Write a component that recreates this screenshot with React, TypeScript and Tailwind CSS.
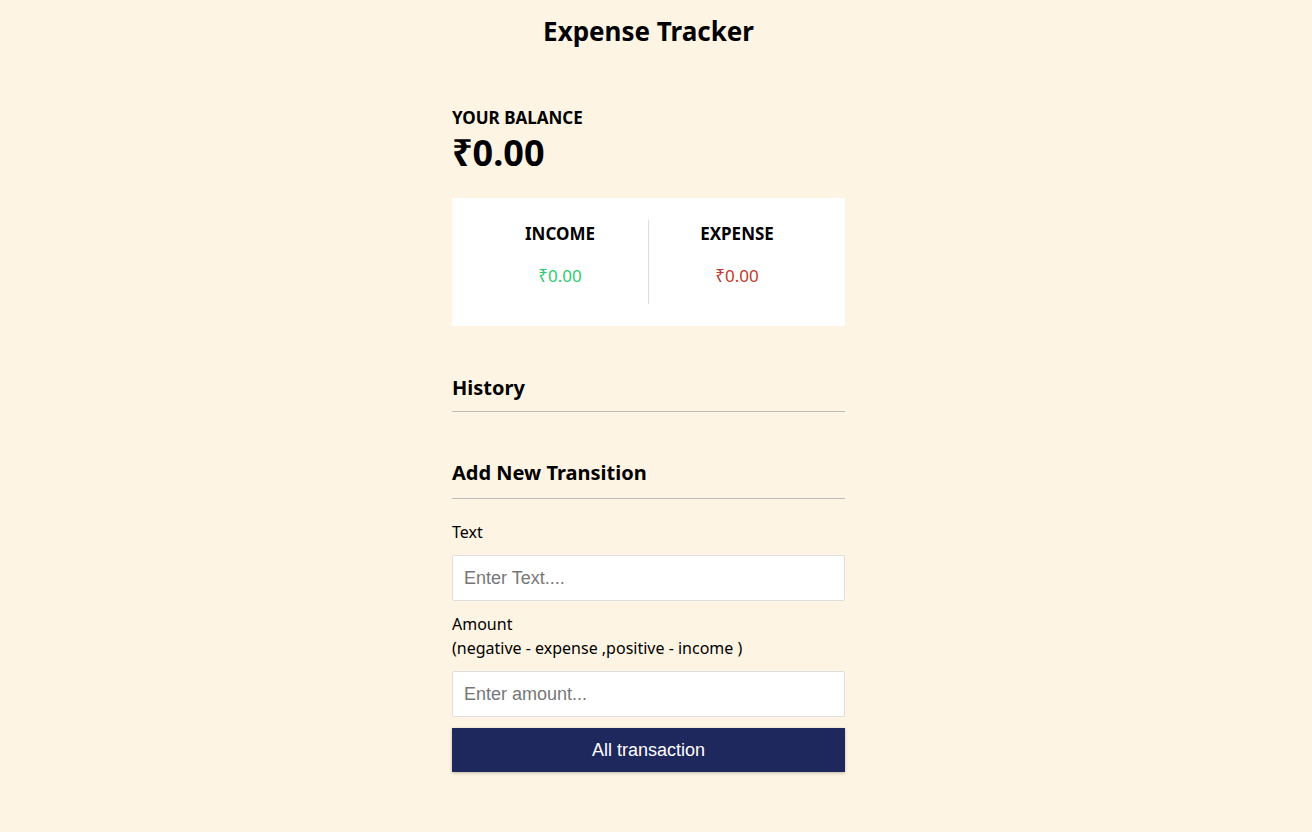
export default function App() {
  return (
    <div className="min-h-[832px] bg-[#fef4e3] pr-[15px] text-black" style={{ fontFamily: '"Noto Sans", sans-serif' }}>
      <h1 className="pt-[12px] text-center text-[26px] font-bold leading-[38px]">Expense Tracker</h1>

      <div className="mx-auto mt-[56px] w-[393px]">
        <h4 className="text-[17px] font-bold leading-[24px]">YOUR BALANCE</h4>
        <h2 className="mt-[1px] text-[36px] font-bold leading-[44px]">₹0.00</h2>

        <div className="mt-[23px] flex h-[128px] items-center bg-white px-[20px]">
          <div className="flex flex-1 flex-col items-center border-r border-[#dedede] py-[2px]">
            <h4 className="text-[17px] font-bold leading-[24px]">INCOME</h4>
            <p className="mt-[19px] text-[17px] leading-[22px] text-[#2ecc71]">₹0.00</p>
            <div className="h-[15px]" />
          </div>
          <div className="flex flex-1 flex-col items-center py-[2px]">
            <h4 className="text-[17px] font-bold leading-[24px]">EXPENSE</h4>
            <p className="mt-[19px] text-[17px] leading-[22px] text-[#c0392b]">₹0.00</p>
            <div className="h-[15px]" />
          </div>
        </div>

        <h3 className="mt-[48px] border-b border-[#bbb] pb-[9px] text-[20px] font-bold leading-[28px]">History</h3>

        <h3 className="mt-[47px] border-b border-[#bbb] pb-[11px] text-[20px] font-bold leading-[28px]">Add New Transition</h3>

        <form className="mt-[21px]">
          <label className="block text-[16px] leading-[24px]">Text</label>
          <input
            type="text"
            placeholder="Enter Text...."
            className="mt-[11px] block h-[46px] w-full rounded-[2px] border border-[#dedede] bg-white px-[11px] text-[18px] placeholder:text-[#777] focus:outline-none"
            style={{ fontFamily: '"Liberation Sans", Arial, sans-serif' }}
          />
          <label className="mt-[11px] block text-[16px] leading-[24px]">
            Amount
            <br />
            (negative - expense ,positive - income )
          </label>
          <input
            type="number"
            placeholder="Enter amount..."
            className="mt-[11px] block h-[46px] w-full rounded-[2px] border border-[#dedede] bg-white px-[11px] text-[18px] placeholder:text-[#777] focus:outline-none"
            style={{ fontFamily: '"Liberation Sans", Arial, sans-serif' }}
          />
          <button
            type="button"
            className="mt-[11px] block h-[44px] w-full bg-[#1f285c] text-[18px] text-white shadow-[0_1px_3px_rgba(0,0,0,0.25)]"
            style={{ fontFamily: '"Liberation Sans", Arial, sans-serif' }}
          >
            All transaction
          </button>
        </form>
      </div>
    </div>
  )
}
